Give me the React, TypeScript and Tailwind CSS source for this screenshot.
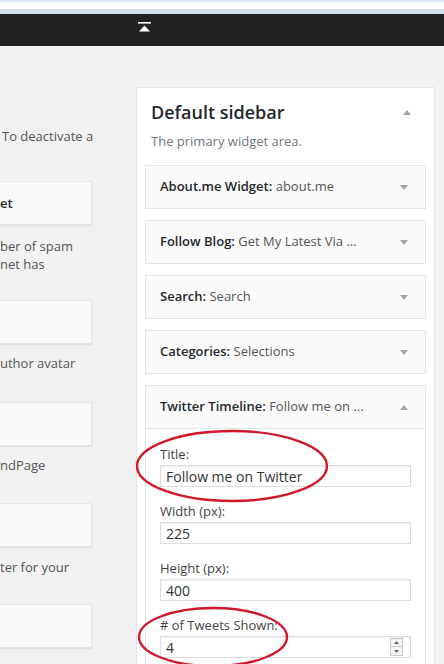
import React from "react";

function Arrow({ up }: { up?: boolean }) {
  return (
    <svg width="8" height="5" viewBox="0 0 8 5" className="shrink-0">
      <path d={up ? "M0 5L4 0L8 5Z" : "M0 0L8 0L4 5Z"} fill="#a0a5aa" />
    </svg>
  );
}

function Row({ bold, rest, up, last }: { bold: string; rest: string; up?: boolean; last?: boolean }) {
  return (
    <div
      className={
        "h-[44px] border border-[#e5e5e5] bg-[#fafafa] flex items-center justify-between pl-[14px] pr-[17px] " +
        (last ? "" : "mb-[11px]")
      }
    >
      <span className="text-[13px] text-[#23282d] whitespace-nowrap">
        <span className="font-semibold">{bold}:</span> <span className="text-[#555]">{rest}</span>
      </span>
      <Arrow up={up} />
    </div>
  );
}

function Field({ label, value, spinner }: { label: string; value: string; spinner?: boolean }) {
  return (
    <div className="mb-[15px]">
      <div className="h-[18px] leading-[18px] text-[13px] text-[#444] mb-[2px]">{label}</div>
      <div className="relative h-[22px] border border-[#ddd] bg-white shadow-[inset_0_1px_2px_rgba(0,0,0,0.07)] flex items-center pl-[5px] text-[14px] text-[#333]">
        {value}
        {spinner && (
          <div className="absolute right-[7px] top-[1px] flex flex-col w-[13px]">
            <div className="h-[9px] border border-[#c8c8c8] bg-[#f4f4f4] flex items-center justify-center">
              <svg width="5" height="3" viewBox="0 0 5 3">
                <path d="M0 3L2.5 0L5 3Z" fill="#666" />
              </svg>
            </div>
            <div className="h-[9px] border border-t-0 border-[#c8c8c8] bg-[#f4f4f4] flex items-center justify-center">
              <svg width="5" height="3" viewBox="0 0 5 3">
                <path d="M0 0L5 0L2.5 3Z" fill="#666" />
              </svg>
            </div>
          </div>
        )}
      </div>
    </div>
  );
}

function LeftBox({ text, mt }: { text?: string; mt: string }) {
  return (
    <div
      className={
        "h-[44px] w-[92px] bg-[#f9f9f9] border border-l-0 border-[#e5e5e5] shadow-[0_1px_1px_rgba(0,0,0,0.06)] flex items-center text-[13px] font-semibold text-[#23282d] " +
        mt
      }
    >
      {text}
    </div>
  );
}

export default function App() {
  return (
    <div className="relative w-[444px] h-[664px] overflow-hidden bg-[#f1f1f1] font-['Open_Sans',sans-serif]">
      {/* browser top strip */}
      <div className="h-[2px] bg-[#dde6f2]" />
      <div className="h-[7px] bg-white" />
      <div className="h-[5px] bg-[#d3dfee]" />
      {/* admin bar */}
      <div className="h-[32px] bg-[#222] flex items-start pl-[138px] pt-[8px]">
        <svg width="13" height="10" viewBox="0 0 13 10">
          <rect x="0" y="0" width="13" height="1.6" fill="#fff" />
          <path d="M1 9.5L6.5 3.5L12 9.5Z" fill="#fff" />
        </svg>
      </div>

      <div className="flex">
        {/* left column */}
        <div className="w-[136px] shrink-0 text-[13px] text-[#555] leading-[18px]">
          <div className="mt-[81px] pl-[2px] whitespace-nowrap">To deactivate a</div>
          <LeftBox text="et" mt="mt-[36px]" />
          <div className="mt-[12px]">ber of spam</div>
          <div>net has</div>
          <LeftBox mt="mt-[27px]" />
          <div className="mt-[10px]">uthor avatar</div>
          <LeftBox mt="mt-[30px]" />
          <div className="mt-[10px]">ndPage</div>
          <LeftBox mt="mt-[29px]" />
          <div className="mt-[11px]">ter for your</div>
          <LeftBox mt="mt-[28px]" />
        </div>

        {/* sidebar panel */}
        <div className="mt-[41px] w-[299px] h-[600px] bg-white border border-[#e5e5e5] shadow-[0_1px_1px_rgba(0,0,0,0.04)] px-[8px]">
          <div className="flex items-center justify-between pl-[6px] pr-[15px] pt-[12px]">
            <div className="text-[18px] leading-[24px] font-semibold text-[#23282d]">Default sidebar</div>
            <Arrow up />
          </div>
          <div className="pl-[6px] mt-[8px] text-[13px] leading-[18px] text-[#72777c]">The primary widget area.</div>
          <div className="mt-[15px]">
            <Row bold="About.me Widget" rest="about.me" />
            <Row bold="Follow Blog" rest="Get My Latest Via ..." />
            <Row bold="Search" rest="Search" />
            <Row bold="Categories" rest="Selections" />
            <Row bold="Twitter Timeline" rest="Follow me on ..." up last />
            <div className="border border-t-0 border-[#e5e5e5] bg-white pl-[14px] pr-[14px] pt-[16px]">
              <Field label="Title:" value="Follow me on Twitter" />
              <Field label="Width (px):" value="225" />
              <Field label="Height (px):" value="400" />
              <Field label="# of Tweets Shown:" value="4" spinner />
            </div>
          </div>
        </div>
      </div>

      {/* red annotation ellipses */}
      <svg className="absolute left-0 top-0 pointer-events-none" width="444" height="664" viewBox="0 0 444 664">
        <ellipse cx="232" cy="466" rx="95" ry="35" fill="none" stroke="#d0182b" strokeWidth="2.4" />
        <ellipse cx="213" cy="637" rx="74" ry="29" fill="none" stroke="#d0182b" strokeWidth="2.4" />
      </svg>
    </div>
  );
}
